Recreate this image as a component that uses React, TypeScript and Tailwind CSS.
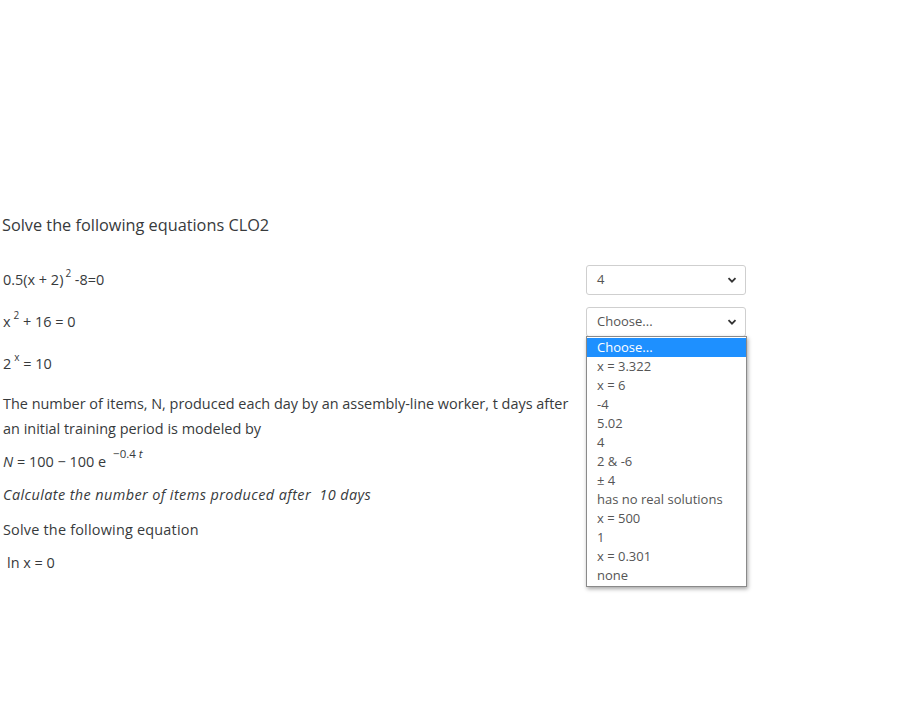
import React from "react";

const options = [
  "Choose...",
  "x = 3.322",
  "x = 6",
  "-4",
  "5.02",
  "4",
  "2 & -6",
  "± 4",
  "has no real solutions",
  "x = 500",
  "1",
  "x = 0.301",
  "none",
];

function Select({ value, hidden }: { value: string; hidden?: boolean }) {
  return (
    <div
      className={
        "flex h-[30px] w-[160px] shrink-0 items-center justify-between rounded-[3px] border border-[#cfcfcf] bg-white pl-[10px] pr-[8px] text-[13px] text-[#555] " +
        (hidden ? "invisible" : "")
      }
    >
      <span>{value}</span>
      <svg width="10" height="10" viewBox="0 0 10 10">
        <path d="M1.5 3.2 L5 6.7 L8.5 3.2" fill="none" stroke="#333" strokeWidth="1.8" />
      </svg>
    </div>
  );
}

export default function App() {
  return (
    <div
      className="relative h-[723px] w-[916px] bg-white text-[#373a3c]"
      style={{ fontFamily: '"Open Sans", "Noto Sans", sans-serif' }}
    >
      <div className="pt-[212px]">
        <div className="pl-[2px] text-[16.3px] leading-[26px]">Solve the following equations CLO2</div>

        <div className="mt-[21px] flex flex-col text-[14.45px]">
          <div className="flex h-[42px] items-center">
            <div className="w-[586px] pl-[3px]">
              0.5(x + 2)<sup className="relative -top-[8px] ml-[2px] text-[10px]">2</sup> -8=0
            </div>
            <Select value="4" />
          </div>
          <div className="flex h-[42px] items-center">
            <div className="w-[586px] pl-[3px]">
              x<sup className="relative -top-[8px] ml-[3px] text-[10px]">2</sup> + 16 = 0
            </div>
            <Select value="Choose..." />
          </div>
          <div className="flex h-[42px] items-center">
            <div className="w-[586px] pl-[3px]">
              2<sup className="relative -top-[8px] ml-[3px] text-[10px]">x</sup> = 10
            </div>
            <Select value="Choose..." hidden />
          </div>

          <div className="mt-[6px] flex items-start">
            <div className="w-[586px] pl-[3px] pr-[10px]">
              <p className="leading-[25px]">
                The number of items, N, produced each day by an assembly-line worker, t days after an initial training period is modeled by
              </p>
              <p className="mt-[8px] leading-[25px]">
                <i>N</i> = 100 − 100 e
                <sup className="relative -top-[9px] ml-[7px] text-[11.5px]">
                  −0.4 <i>t</i>
                </sup>
              </p>
              <p className="mt-[8px] italic leading-[25px] tracking-[0.4px]">
                Calculate the number of items produced after&nbsp; 10 days
              </p>
            </div>
            <Select value="Choose..." hidden />
          </div>

          <div className="mt-[10px] flex items-start">
            <div className="w-[586px] pl-[3px]">
              <p className="leading-[25px] tracking-[0.2px]">Solve the following equation</p>
              <p className="mt-[8px] pl-[4px] leading-[25px]">ln x = 0</p>
            </div>
            <Select value="Choose..." hidden />
          </div>
        </div>
      </div>

      <div className="absolute left-[586px] top-[336px] w-[161px] border border-[#8a8a8a] bg-white py-[1px] text-[13px] text-[#555] shadow-[1px_2px_4px_rgba(0,0,0,0.35)]">
        {options.map((o, i) => (
          <div
            key={i}
            className={
              "h-[19px] pl-[10px] leading-[19px] " +
              (i === 0 ? "bg-[#1e90ff] text-white" : "")
            }
          >
            {o}
          </div>
        ))}
      </div>
    </div>
  );
}
